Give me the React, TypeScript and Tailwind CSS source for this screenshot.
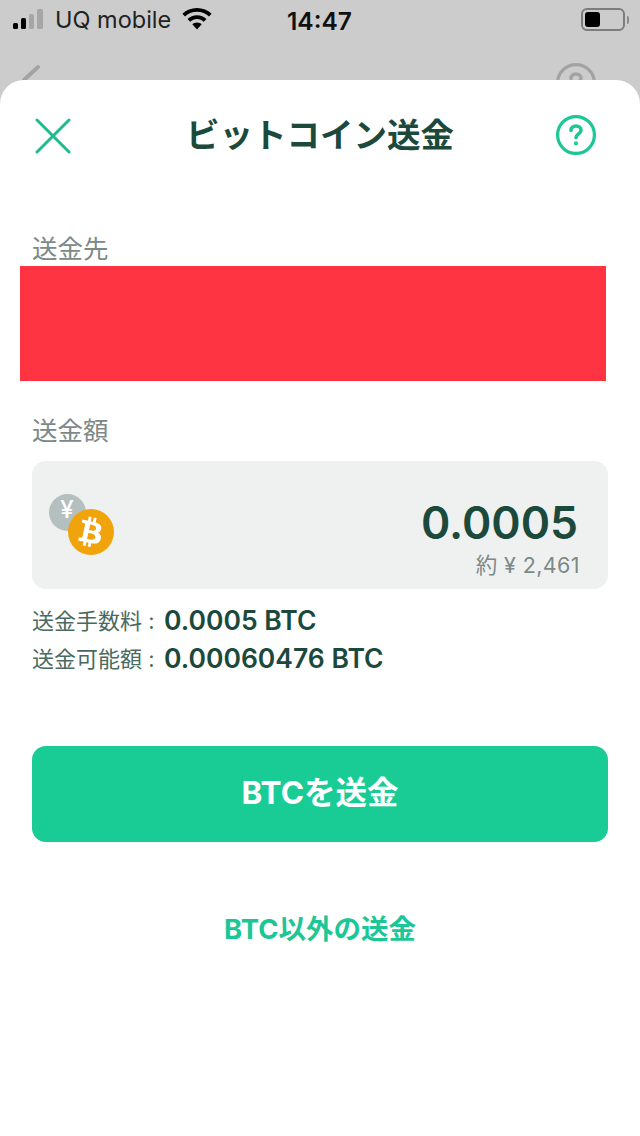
import React from 'react';
import { FaBtc } from 'react-icons/fa';

const font = "font-['Inter','Noto_Sans_CJK_JP',sans-serif]";

const StatusBar: React.FC = () => (
  <div className="h-10 flex items-center relative text-[#111]">
    <div className="ml-[13px] flex items-end gap-[3px] h-[20px] mt-[-2px]">
      <div className="w-[5px] h-[6px] rounded-[1.5px] bg-black" />
      <div className="w-[5px] h-[11px] rounded-[1.5px] bg-black" />
      <div className="w-[5px] h-[15px] rounded-[1.5px] bg-[#a6a6a6]" />
      <div className="w-[6px] h-[20px] rounded-[1.5px] bg-[#a6a6a6]" />
    </div>
    <span className="ml-[12px] text-[23.5px] leading-none text-[#222] mt-[-1px]">UQ mobile</span>
    <svg className="ml-[11px] mb-[2px]" width="30" height="22" viewBox="0 0 30 22" fill="#000">
      <path d="M15 0C9.300 0 4.200 2.200 0.400 5.800L3 8.600C6.100 5.600 10.300 3.800 15 3.800s8.900 1.800 12 4.800l2.600-2.800C25.800 2.200 20.700 0 15 0z" />
      <path d="M15 7.200c-3.700 0-7 1.400-9.500 3.800l2.700 2.800c1.800-1.700 4.200-2.800 6.800-2.800s5 1.100 6.800 2.800l2.700-2.800C22 8.600 18.700 7.200 15 7.200z" />
      <path d="M15 14.400c-1.800 0-3.400 0.700-4.700 1.900L15 21.500l4.700-5.200c-1.300-1.200-2.900-1.900-4.700-1.900z" />
    </svg>
    <span className="absolute left-[287px] top-[8px] text-[24.500px] leading-[26px] font-semibold">14:47</span>
    <div className="absolute left-[581px] top-[8px] flex items-center">
      <div className="w-[44px] h-[23px] rounded-[6px] border-[2px] border-[#7d7d7d] p-[2px]">
        <div className="w-[15px] h-full rounded-[3px] bg-black" />
      </div>
      <div className="ml-[2px] w-[2px] h-[8px] rounded-r-[2px] bg-[#8a8a8a]" />
    </div>
  </div>
);

const CoinIcon: React.FC = () => (
  <div className="relative w-[66px] h-[62px]">
    <div className="absolute left-0 top-0 w-[37px] h-[37px] rounded-full bg-[#b3c0bf] flex items-center justify-center text-white text-[24px] font-medium leading-none pb-[5px] pr-[1px]">¥</div>
    <div className="absolute left-[19px] top-[15px] w-[46px] h-[46px] rounded-full bg-[#f0a30a] flex items-center justify-center text-white">
      <FaBtc size={30} className="rotate-[12deg]" />
    </div>
  </div>
);

const HelpIcon: React.FC<{ color: string }> = ({ color }) => (
  <svg width="40" height="40" viewBox="0 0 40 40" fill="none" stroke={color} strokeLinecap="round" strokeLinejoin="round">
    <circle cx="20" cy="20" r="18.400" strokeWidth="3.200" />
    <path d="M15 15.500c0-2.900 2.200-4.500 5-4.500s5 1.600 5 4.200c0 3.800-5 3.500-5 7.600" strokeWidth="3.600" />
    <circle cx="20" cy="28.400" r="0.900" strokeWidth="2.400" />
  </svg>
);

const App: React.FC = () => (
  <div className={`w-[640px] h-[1136px] bg-[#cccccc] overflow-hidden flex flex-col ${font}`}>
    <StatusBar />
    <div className="relative h-10">
      {/* header of the page behind the sheet */}
      <svg className="absolute left-[18px] top-[24px]" width="24" height="16" viewBox="0 0 24 16" fill="none" stroke="#a3a3a3" strokeWidth="4" strokeLinecap="round">
        <path d="M20 3L6 16" />
      </svg>
      <div className="absolute left-[556px] top-[23px]"><HelpIcon color="#a3a3a3" /></div>
    </div>
    <div className="relative flex-1 bg-white rounded-t-[24px] px-[32px]">
      <div className="relative h-[110px] flex items-center justify-center">
        <svg className="absolute left-[3px] top-[38px]" width="36" height="36" viewBox="0 0 36 36" fill="none" stroke="#1dbb8d" strokeWidth="3" strokeLinecap="round">
          <path d="M2 2L34 34M34 2L2 34" />
        </svg>
        <h1 className="text-[33.500px] leading-none font-bold text-[#1b4a3d] mt-[1px]">ビットコイン送金</h1>
        <div className="absolute right-[12px] top-[35px]"><HelpIcon color="#1cc795" /></div>
      </div>
      <div className="mt-[44px] text-[25.500px] leading-[30px] text-[#7c8987] h-[32px]">送金先</div>
      <div className="ml-[-12px] w-[586px] h-[115px] bg-[#ff3443]" />
      <div className="mt-[35px] text-[25.500px] leading-[30px] text-[#7c8987]">送金額</div>
      <div className="mt-[15px] h-[128px] rounded-[14px] bg-[#eef1f0] flex items-start justify-between pl-[17px] pr-[28px]">
        <div className="mt-[33px]"><CoinIcon /></div>
        <div className="flex flex-col items-end">
          <div className="mt-[35px] text-[44.500px] leading-[54px] font-semibold text-[#1b4a3d] mr-[2px]">0.0005</div>
          <div className="text-[21.500px] leading-[26px] mt-[2px] text-[#7c8987] tracking-[0.4px]">約 ¥ 2,461</div>
        </div>
      </div>
      <div className="mt-[13px] flex items-center h-[38px] text-[#1b4a3d]">
        <span className="text-[22px] text-[#4a6a60] w-[132px] whitespace-pre">送金手数料 :</span>
        <span className="text-[26.500px] font-semibold">0.0005 BTC</span>
      </div>
      <div className="flex items-center h-[38px] text-[#1b4a3d]">
        <span className="text-[22px] text-[#4a6a60] w-[132px] whitespace-pre">送金可能額 :</span>
        <span className="text-[26.500px] font-semibold">0.00060476 BTC</span>
      </div>
      <div className="mt-[68px] h-[96px] rounded-[14px] bg-[#19cc95] flex items-center justify-center text-white text-[31.500px] font-bold pb-[3px]">BTCを送金</div>
      <div className="mt-[67px] text-center text-[27.500px] leading-[40px] font-bold text-[#1cc795]">BTC以外の送金</div>
    </div>
  </div>
);

export default App;
